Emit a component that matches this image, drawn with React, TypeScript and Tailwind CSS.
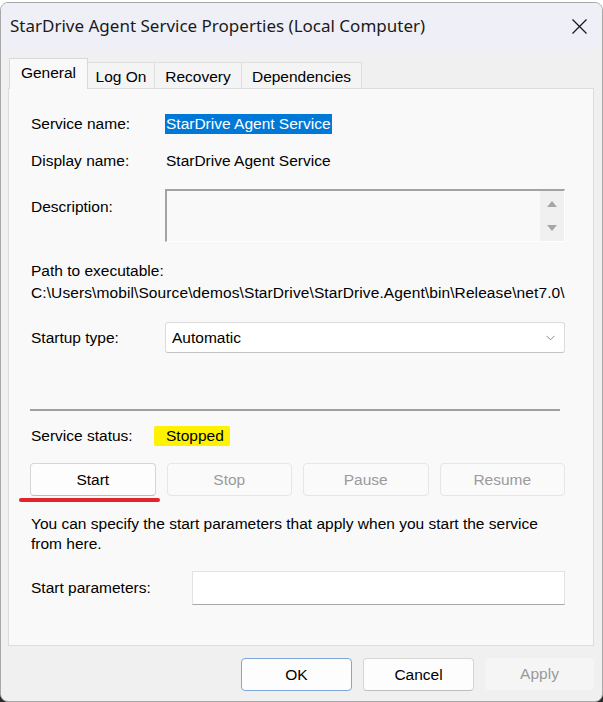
import React from "react";

const body = { fontFamily: '"Liberation Sans", Arial, sans-serif' };

function Tab({ label, active, w }: { label: string; active?: boolean; w: string }) {
  if (active) {
    return (
      <div
        className={`${w} h-[31px] -mb-[1px] relative z-10 bg-[#f9f9f9] border border-b-0 border-[#d9d9d9] flex items-start justify-center pt-[4px] leading-[20px]`}
      >
        {label}
      </div>
    );
  }
  return (
    <div
      className={`${w} h-[26px] bg-[#f4f4f4] border border-b-0 border-l-0 border-[#dedede] flex items-start justify-center pt-[4px] leading-[20px]`}
    >
      {label}
    </div>
  );
}

function Btn({ label, disabled, w, primary }: { label: string; disabled?: boolean; w?: string; primary?: boolean }) {
  if (disabled) {
    return (
      <div
        className={`${w ?? ""} h-[33px] rounded-[4px] border border-[#e6e6e6] bg-[#fafafa] text-[#9a9a9a] flex items-center justify-center`}
      >
        {label}
      </div>
    );
  }
  return (
    <div
      className={`${w ?? ""} h-[33px] rounded-[4px] border ${primary ? "border-[#7ea6d6]" : "border-[#d6d6d6] border-b-[#bdbdbd]"} bg-[#fdfdfd] text-black flex items-center justify-center`}
    >
      {label}
    </div>
  );
}

export default function App() {
  return (
    <div className="w-[603px] h-[702px] bg-white overflow-hidden relative" style={body}>
      <div className="absolute left-0 bottom-0 w-[10px] h-[10px] bg-[#2a2a2a]" />
      <div className="absolute right-0 bottom-0 w-[10px] h-[10px] bg-[#2a2a2a]" />
      <div className="relative mt-[2px] h-[700px] rounded-[8px] border border-[#a8a8a8] bg-[#f0f0f0] overflow-hidden flex flex-col text-[15.5px] text-black">
        {/* Title bar */}
        <div className="h-[46px] bg-[#eff0f7] flex items-center justify-between pl-[9px] pr-[13px] shrink-0">
          <div
            className="text-[17px] text-[#1a1a1a] leading-[22px] -mt-[1px]"
            style={{ fontFamily: '"Noto Sans", "Open Sans", sans-serif' }}
          >
            StarDrive Agent Service Properties (Local Computer)
          </div>
          <svg width="17" height="17" viewBox="0 0 17 17" className="mr-[1px]">
            <path d="M1.5 1.5 L15.5 15.5 M15.5 1.5 L1.5 15.5" stroke="#1a1a1a" strokeWidth="1.3" fill="none" />
          </svg>
        </div>

        {/* Tabs */}
        <div className="pt-[9px] pl-[8px] flex items-end">
          <Tab label="General" active w="w-[79px]" />
          <Tab label="Log On" w="w-[67px]" />
          <Tab label="Recovery" w="w-[87px]" />
          <Tab label="Dependencies" w="w-[120px]" />
        </div>

        {/* Panel */}
        <div className="ml-[7px] mr-[8px] h-[558px] bg-[#f9f9f9] border border-[#dcdcdc] pl-[22px] pr-[28px] flex flex-col">
          <div className="mt-[25px] h-[20px] flex items-center leading-[20px]">
            <div className="w-[134px]">Service name:</div>
            <span className="bg-[#0078d7] text-white px-[1px] h-[20px] leading-[20px]">StarDrive Agent Service</span>
          </div>
          <div className="mt-[17px] h-[20px] flex items-center leading-[20px]">
            <div className="w-[135px]">Display name:</div>
            <span>StarDrive Agent Service</span>
          </div>
          <div className="mt-[18px] flex items-start">
            <div className="w-[134px] mt-[8px] leading-[20px]">Description:</div>
            <div className="flex-1 h-[53px] border-t-2 border-l-2 border-[#a3a3a3] border-b border-r border-b-white border-r-white flex justify-end">
              <div className="w-[24px] h-full bg-[#f0f0f0] flex flex-col items-center justify-between py-[10px]">
                <svg width="10" height="6" viewBox="0 0 10 6">
                  <path d="M5 0 L10 6 L0 6 Z" fill="#a6a6a6" />
                </svg>
                <svg width="10" height="6" viewBox="0 0 10 6">
                  <path d="M0 0 L10 0 L5 6 Z" fill="#a6a6a6" />
                </svg>
              </div>
            </div>
          </div>
          <div className="mt-[19px] leading-[20px]">Path to executable:</div>
          <div className="mt-[2px] leading-[20px] whitespace-nowrap tracking-[0.1px]">
            C:\Users\mobil\Source\demos\StarDrive\StarDrive.Agent\bin\Release\net7.0\
          </div>
          <div className="mt-[19px] flex items-center">
            <div className="w-[134px]">Startup type:</div>
            <div className="flex-1 h-[31px] bg-white border border-[#dcdcdc] border-b-[#c4c4c4] rounded-[3px] flex items-center justify-between pl-[6px] pr-[9px]">
              <span>Automatic</span>
              <svg width="9" height="6" viewBox="0 0 9 6">
                <path d="M0.5 0.8 L4.5 4.8 L8.5 0.8" stroke="#8a8a8a" strokeWidth="1" fill="none" />
              </svg>
            </div>
          </div>
          <div className="mt-[56px] mr-[5px] -ml-[1px] h-[2px] bg-[#a0a0a0]" />
          <div className="mt-[14px] h-[22px] flex items-center">
            <div className="w-[123px]">Service status:</div>
            <span className="bg-[#fff200] h-[20px] leading-[20px] pl-[12px] pr-[6px] rounded-[2px]">Stopped</span>
          </div>
          <div className="relative mt-[16px] grid grid-cols-4 gap-[11px] -ml-[1px]">
            <Btn label="Start" />
            <Btn label="Stop" disabled />
            <Btn label="Pause" disabled />
            <Btn label="Resume" disabled />
            <div className="absolute left-[-11px] top-[35px] w-[141px] h-[4px] rounded-full bg-[#e3242b]" />
          </div>
          <div className="mt-[18px] leading-[19.5px]">
            You can specify the start parameters that apply when you start the service from here.
          </div>
          <div className="mt-[18px] flex items-center">
            <div className="w-[161px]">Start parameters:</div>
            <div className="flex-1 h-[34px] bg-white border border-[#e3e3e3] border-b-[#a8a8a8]" />
          </div>
        </div>

        {/* Bottom buttons */}
        <div className="mt-[12px] flex justify-end gap-[11px] pr-[8px]">
          <Btn label="OK" w="w-[111px]" primary />
          <Btn label="Cancel" w="w-[111px]" />
          <div className="w-[109px] h-[32px] rounded-[4px] bg-[#f5f5f5] text-[#9a9a9a] flex items-center justify-center">
            Apply
          </div>
        </div>
      </div>
    </div>
  );
}
